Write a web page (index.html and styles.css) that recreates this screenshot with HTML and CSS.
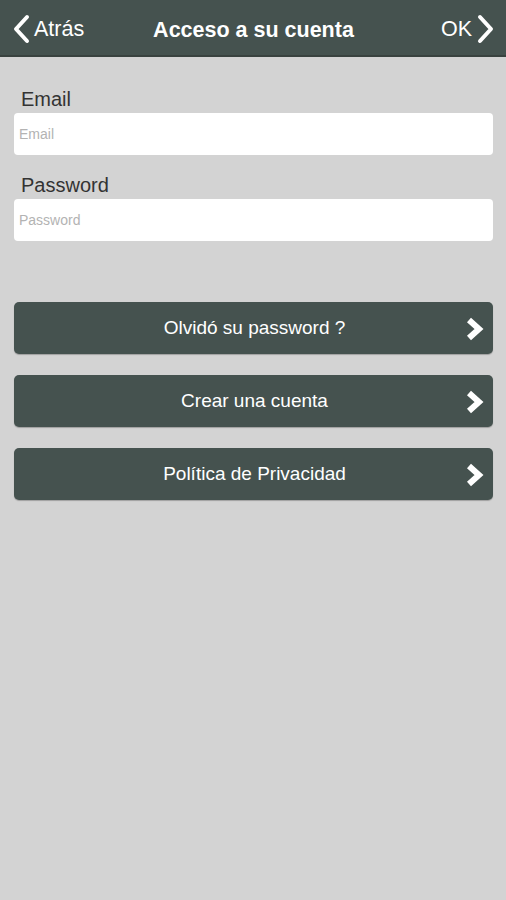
FILE: index.html
```html
<!DOCTYPE html>
<html lang="es">
<head>
<meta charset="utf-8">
<title>Acceso a su cuenta</title>
<link rel="stylesheet" href="styles.css">
</head>
<body>
<header class="bar">
  <a class="nav back">
    <svg class="nav-chev" viewBox="0 0 18 30" width="18" height="30"><path d="M15 3 L4 15 L15 27" fill="none" stroke="#fff" stroke-width="4" stroke-linecap="round" stroke-linejoin="round"/></svg>
    <span>Atrás</span>
  </a>
  <h1 class="title">Acceso a su cuenta</h1>
  <a class="nav ok">
    <span>OK</span>
    <svg class="nav-chev" viewBox="0 0 18 30" width="18" height="30"><path d="M3 3 L14 15 L3 27" fill="none" stroke="#fff" stroke-width="4" stroke-linecap="round" stroke-linejoin="round"/></svg>
  </a>
</header>
<main class="content">
  <label class="field">
    <span class="label">Email</span>
    <input class="input" type="text" placeholder="Email">
  </label>
  <label class="field">
    <span class="label">Password</span>
    <input class="input" type="password" placeholder="Password">
  </label>
  <div class="buttons">
    <a class="btn"><span>Olvidó su password ?</span><svg class="btn-chev" viewBox="0 0 20 26" width="20" height="26"><path d="M5 4 L15 13 L5 22" fill="none" stroke="#fff" stroke-width="6" stroke-linejoin="miter" stroke-linecap="butt"/></svg></a>
    <a class="btn"><span>Crear una cuenta</span><svg class="btn-chev" viewBox="0 0 20 26" width="20" height="26"><path d="M5 4 L15 13 L5 22" fill="none" stroke="#fff" stroke-width="6" stroke-linejoin="miter" stroke-linecap="butt"/></svg></a>
    <a class="btn"><span>Política de Privacidad</span><svg class="btn-chev" viewBox="0 0 20 26" width="20" height="26"><path d="M5 4 L15 13 L5 22" fill="none" stroke="#fff" stroke-width="6" stroke-linejoin="miter" stroke-linecap="butt"/></svg></a>
  </div>
</main>
</body>
</html>
```
FILE: styles.css
```css
html, body {
  margin: 0;
  padding: 0;
}
body {
  background: #d3d3d3;
  font-family: "Liberation Sans", Arial, sans-serif;
  width: 506px;
  min-height: 900px;
}
.bar {
  height: 57px;
  background: #45524f;
  border-bottom: 2px solid #39423f;
  display: grid;
  grid-template-columns: 1fr auto 1fr;
  align-items: center;
  padding: 3px 11px 0 12px;
  box-sizing: border-box;
  color: #fff;
}
.nav {
  display: flex;
  align-items: center;
  gap: 4px;
  font-size: 21.5px;
  color: #fff;
}
.ok { justify-self: end; gap: 5px; }
.title {
  margin: 0;
  font-size: 21.5px;
  font-weight: bold;
  margin-top: 2px;
}
.content {
  padding: 31px 13px 0 14px;
  display: flex;
  flex-direction: column;
}
.field {
  display: flex;
  flex-direction: column;
  margin-bottom: 19px;
}
.label {
  font-size: 20px;
  color: #333;
  padding-left: 7px;
  line-height: 22px;
  margin-bottom: 3px;
}
.input {
  height: 42px;
  border: none;
  border-radius: 4px;
  background: #fff;
  padding: 0 5px;
  font-family: "Liberation Sans", Arial, sans-serif;
  font-size: 14px;
  box-sizing: border-box;
  outline: none;
}
.input::placeholder { color: #b3b3b3; }
.buttons {
  margin-top: 42px;
  display: flex;
  flex-direction: column;
  gap: 21px;
}
.btn {
  position: relative;
  height: 52px;
  background: #45524f;
  border-radius: 5px;
  box-shadow: 0 1px 1px rgba(0,0,0,0.25);
  color: #fff;
  font-size: 19px;
  display: flex;
  align-items: center;
  justify-content: center;
}
.btn span { margin-left: 2px; }
.btn-chev {
  position: absolute;
  right: 9px;
  top: 14px;
}
```
